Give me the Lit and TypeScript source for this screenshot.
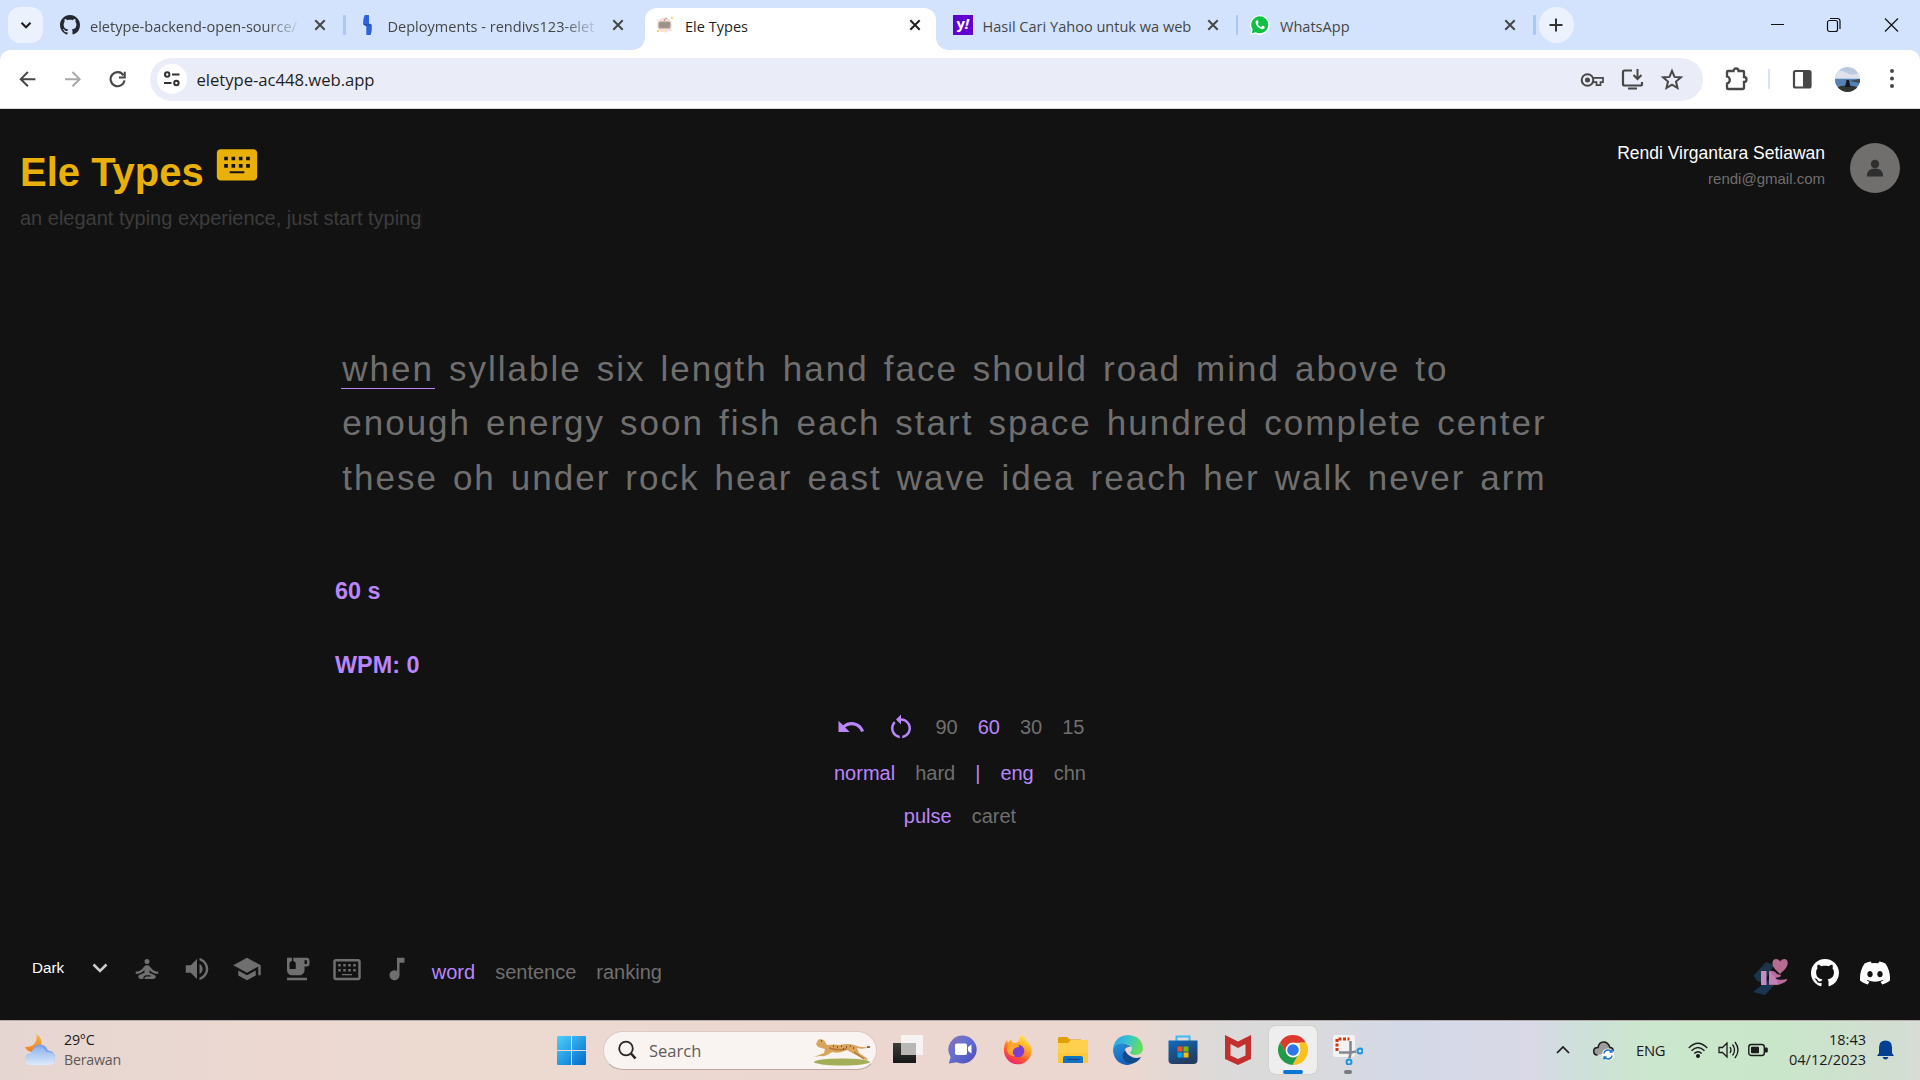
import { LitElement, html, css, svg } from "lit";
import { customElement } from "lit/decorators.js";

const GITHUB =
  "M8 0C3.58 0 0 3.58 0 8c0 3.54 2.29 6.53 5.47 7.59.4.07.55-.17.55-.38 0-.19-.01-.82-.01-1.49-2.01.37-2.53-.49-2.69-.94-.09-.23-.48-.94-.82-1.13-.28-.15-.68-.52-.01-.53.63-.01 1.08.58 1.23.82.72 1.21 1.87.87 2.33.66.07-.52.28-.87.51-1.07-1.78-.2-3.64-.89-3.64-3.95 0-.87.31-1.59.82-2.15-.08-.2-.36-1.02.08-2.12 0 0 .67-.21 2.2.82.64-.18 1.32-.27 2-.27s1.36.09 2 .27c1.53-1.04 2.2-.82 2.2-.82.44 1.1.16 1.92.08 2.12.51.56.82 1.27.82 2.15 0 3.07-1.87 3.75-3.65 3.95.29.25.54.73.54 1.48 0 1.07-.01 1.93-.01 2.2 0 .21.15.46.55.38A8.01 8.01 0 0 0 16 8c0-4.42-3.58-8-8-8z";
const DISCORD =
  "M20.317 4.37a19.79 19.79 0 0 0-4.885-1.515.074.074 0 0 0-.079.037c-.21.375-.444.864-.608 1.25a18.27 18.27 0 0 0-5.487 0 12.64 12.64 0 0 0-.617-1.25.077.077 0 0 0-.079-.037A19.74 19.74 0 0 0 3.677 4.37a.07.07 0 0 0-.032.027C.533 9.046-.32 13.58.099 18.057a.082.082 0 0 0 .031.057 19.9 19.9 0 0 0 5.993 3.03.078.078 0 0 0 .084-.028c.462-.63.874-1.295 1.226-1.994a.076.076 0 0 0-.041-.106 13.1 13.1 0 0 1-1.872-.892.077.077 0 0 1-.008-.128c.126-.094.252-.192.372-.291a.074.074 0 0 1 .077-.01c3.928 1.793 8.18 1.793 12.062 0a.074.074 0 0 1 .078.009c.12.099.246.198.373.292a.077.077 0 0 1-.006.127 12.3 12.3 0 0 1-1.873.892.077.077 0 0 0-.041.107c.36.698.772 1.362 1.225 1.993a.076.076 0 0 0 .084.028 19.84 19.84 0 0 0 6.002-3.03.077.077 0 0 0 .032-.054c.5-5.177-.838-9.674-3.549-13.66a.061.061 0 0 0-.031-.03zM8.02 15.33c-1.183 0-2.157-1.085-2.157-2.419 0-1.333.956-2.419 2.157-2.419 1.21 0 2.176 1.096 2.157 2.42 0 1.333-.956 2.418-2.157 2.418zm7.975 0c-1.183 0-2.157-1.085-2.157-2.419 0-1.333.955-2.419 2.157-2.419 1.21 0 2.176 1.096 2.157 2.42 0 1.333-.946 2.418-2.157 2.418z";
const KEYBOARD =
  "M21 4H3c-1.1 0-2 .9-2 2v13c0 1.1.9 2 2 2h18c1.1 0 2-.9 2-2V6c0-1.1-.9-2-2-2zM5 8h2v2H5zM9 8h2v2H9zM13 8h2v2h-2zM17 8h2v2h-2zM5 12h2v2H5zM9 12h2v2H9zM13 12h2v2h-2zM17 12h2v2h-2zM8 16h8v1H8z";
const KEYBOARD_OUTLINE =
  "M21 4H3c-1.1 0-2 .9-2 2v13c0 1.1.9 2 2 2h18c1.1 0 2-.9 2-2V6c0-1.1-.9-2-2-2zm0 15H3V6h18v13zM5 8h2v2H5zM9 8h2v2H9zM13 8h2v2h-2zM17 8h2v2h-2zM5 12h2v2H5zM9 12h2v2H9zM13 12h2v2h-2zM17 12h2v2h-2zM8 16h8v1H8z";
const UNDO =
  "M12.5 8c-2.65 0-5.05.99-6.9 2.6L2 7v9h9l-3.62-3.62c1.39-1.16 3.16-1.88 5.12-1.88 3.54 0 6.55 2.31 7.6 5.5l2.37-.78C21.08 11.03 17.15 8 12.5 8z";
const RESTART =
  "M12 5V2L8 6l4 4V7c3.31 0 6 2.69 6 6 0 2.97-2.17 5.43-5 5.91v2.02c3.95-.49 7-3.85 7-7.93 0-4.42-3.58-8-8-8zM6 13c0-1.65.67-3.15 1.76-4.24L6.34 7.34C4.9 8.79 4 10.79 4 13c0 4.08 3.05 7.44 7 7.93v-2.02c-2.83-.48-5-2.94-5-5.91z";
const MEDITATE =
  "M12 4a2 2 0 1 1 0 4a2 2 0 1 1 0-4zM21 16v-2c-2.24 0-4.16-.96-5.6-2.68l-1.34-1.6c-.38-.46-.94-.72-1.53-.72h-1.05c-.59 0-1.15.26-1.53.72l-1.34 1.6C7.16 13.04 5.24 14 3 14v2c2.77 0 5.19-1.17 7-3.25V15l-3.88 1.55c-.67.27-1.12.93-1.12 1.66C5 19.2 5.8 20 6.79 20H9v-.5c0-1.38 1.12-2.5 2.5-2.5h3c.28 0 .5.22.5.5s-.22.5-.5.5h-3c-.83 0-1.5.67-1.5 1.5v.5h7.1c.85 0 1.68-.54 1.87-1.37.19-.82-.22-1.6-.94-1.89L14 15v-2.25c1.81 2.08 4.23 3.25 7 3.25z";
const VOLUME =
  "M3 9v6h4l5 5V4L7 9H3zm13.5 3c0-1.77-1.02-3.29-2.5-4.03v8.05c1.48-.73 2.5-2.25 2.5-4.02zM14 3.23v2.06c2.89.86 5 3.54 5 6.71s-2.11 5.85-5 6.71v2.06c4.01-.91 7-4.49 7-8.77s-2.99-7.86-7-8.77z";
const SCHOOL = "M5 13.18v4L12 21l7-3.82v-4L12 17l-7-3.82zM12 3L1 9l11 6 9-4.91V17h2V9L12 3z";
const TEA =
  "M20 3H9v2.4l1.81 1.45c.12.09.19.24.19.39v4.26c0 .28-.22.5-.5.5h-4c-.28 0-.5-.22-.5-.5V7.24c0-.15.07-.3.19-.39L8 5.4V3H4v10c0 2.21 1.79 4 4 4h6c2.21 0 4-1.79 4-4v-3h2c1.11 0 2-.89 2-2V5c0-1.11-.89-2-2-2zm0 5h-2V5h2v3zM4 19h16v2H4z";
const NOTE =
  "M12 3v10.55c-.59-.34-1.27-.55-2-.55-2.21 0-4 1.79-4 4s1.79 4 4 4 4-1.79 4-4V7h4V3h-6z";

const glyph = (d: string, cls = "") =>
  html`<svg class="mi ${cls}" viewBox="0 0 24 24"><path fill-rule="evenodd" d=${d} /></svg>`;

const closeIcon = html`<svg class="x" viewBox="0 0 20 20"><path d="M5.3 5.3l9.4 9.4M14.7 5.3l-9.4 9.4" stroke="currentColor" stroke-width="2" /></svg>`;

const favGithub = svg`<svg class="fav" viewBox="0 0 16 16"><path fill="#24292f" d=${GITHUB} /></svg>`;
const favDeploy = html`<svg class="fav" viewBox="0 0 20 20"><path fill="#2f62d8" d="M6.500 .3q2.500-.8 4.500 0v8.200l2.500 1q1 5-.7 10.200-2.600.9-4.500 0V11.500L5.200 9.500Q4.800 5 6.500 .3z" /><path fill="#1f4bb5" d="M5.200 8.800l8.300 1v1l-6.500-.6z" /></svg>`;
const favEle = html`<svg class="fav" viewBox="0 0 20 20"><circle cx="9.500" cy="10" r="7.500" fill="#fadfd8" /><path d="M9 6q0-2 3-3" stroke="#a59a90" fill="none" /><rect x="3.500" y="6.500" width="12" height="7" rx="1.500" fill="#a39a8e" /><path d="M5 9h9M5 11h9" stroke="#8f867b" stroke-width=".8" /><circle cx="17" cy="3" r="1.100" fill="#f8d33c" /><circle cx="3" cy="16" r="1.100" fill="#f8d33c" /><circle cx="2.500" cy="5" r=".6" fill="#f0a090" /><circle cx="16" cy="15" r=".7" fill="#f0a090" /></svg>`;
const favYahoo = html`<span class="yahoo">y<i>!</i></span>`;
const favWa = html`<svg class="fav" viewBox="0 0 20 20"><path fill="#fff" d="M0 20l1.400-5A9.800 9.800 0 1 1 5 18.600z" /><path fill="#0cc143" d="M1.700 18.300l1-3.700a8.500 8.500 0 1 1 3 2.700z" /><path fill="#fff" d="M7 5.200c-.9.300-1.500 1.300-1.400 2.300.4 3.300 3.500 6.300 6.800 6.700 1 .1 2.200-.6 2.300-1.600.1-.6 0-.7-.3-.9l-1.700-.9c-.3-.1-.5 0-.7.2l-.8 1c-1.700-.6-2.900-1.800-3.500-3.200l.8-1c.1-.2.1-.4 0-.6L7.800 5.500c-.2-.4-.4-.4-.8-.3z" /></svg>`;

const TABS = [
  { icon: favGithub, text: "eletype-backend-open-source/", cls: "fade sep" },
  { icon: favDeploy, text: "Deployments - rendivs123-elet", cls: "fade" },
  { icon: favEle, text: "Ele Types", cls: "active" },
  { icon: favYahoo, text: "Hasil Cari Yahoo untuk wa web", cls: "sep" },
  { icon: favWa, text: "WhatsApp", cls: "sep" },
];

const LINES = [
  "when syllable six length hand face should road mind above to",
  "enough energy soon fish each start space hundred complete center",
  "these oh under rock hear east wave idea reach her walk never arm",
];

@customElement("browser-chrome")
class BrowserChrome extends LitElement {
  static styles = css`
    :host { display: block; height: 109px; background: #fff; font-family: "Open Sans", "Noto Sans", sans-serif; color: #444746; }
    svg { display: block; flex: none; }
    .strip { height: 50px; background: #d3e2fd; display: flex; align-items: center; padding-left: 8px; }
    .drop { width: 35px; height: 36px; border-radius: 12px; background: #ebf2fe; display: grid; place-items: center; margin-right: 7px; }
    .tab { width: 297.5px; height: 50px; box-sizing: border-box; display: flex; align-items: center; padding-left: 10px; position: relative; }
    .fav { width: 20px; height: 20px; margin-right: 10px; }
    .yahoo { width: 20px; height: 20px; flex: none; margin-right: 10px; background: #5f01d1; color: #fff; font: 700 15px/17px "Open Sans", sans-serif; text-align: center; letter-spacing: -0.5px; }
    .label { width: 210px; flex: none; overflow: hidden; white-space: nowrap; font-size: 14.55px; line-height: 24px; padding-top: 1px; }
    .fade .label { -webkit-mask-image: linear-gradient(90deg, #000 175px, transparent 212px); mask-image: linear-gradient(90deg, #000 175px, transparent 212px); }
    .x { width: 20px; height: 20px; margin-left: 10px; }
    .sep::after { content: ""; width: 2.5px; height: 20px; background: #a8c7fa; border-radius: 1px; margin-left: 13px; }
    .active { z-index: 1; color: #1f1f1f; }
    .active::before { content: ""; position: absolute; left: 0; right: 7px; top: 8px; bottom: 0; background: #fff; border-radius: 12px 12px 0 0; z-index: -1; }
    .active::after { content: ""; position: absolute; left: -12px; right: -5px; bottom: 0; height: 12px; z-index: -1;
      background: radial-gradient(circle at 0 0, transparent 11.5px, #fff 12px) left / 12px 12px no-repeat, radial-gradient(circle at 100% 0, transparent 11.5px, #fff 12px) right / 12px 12px no-repeat; }
    .plus { width: 35px; height: 36px; border-radius: 50%; background: #ebf2fe; display: grid; place-items: center; margin-left: 1px; }
    .win { margin-left: auto; display: flex; gap: 27px; padding-right: 14px; color: #111; }
    .bar { height: 59px; box-sizing: border-box; border-bottom: 1px solid #d5d7da; background: #fff; border-radius: 10px 10px 0 0; display: flex; align-items: center; padding-left: 15px; }
    .under { background: #d3e2fd; }
    .nav { display: flex; gap: 20px; width: 135px; }
    .omni { width: 1553px; height: 43px; border-radius: 22px; background: #eaedf7; box-sizing: border-box; display: flex; align-items: center; padding: 0 19px 0 7px; }
    .site { width: 30px; height: 30px; border-radius: 50%; background: #fff; display: grid; place-items: center; margin-right: 9.5px; }
    .url { color: #1f1f1f; font-size: 16.7px; letter-spacing: -0.05px; flex: 1; }
    .acts { display: flex; gap: 16px; }
    .right { display: flex; align-items: center; padding-left: 21px; }
    .vsep { width: 2px; height: 20px; background: #d3e2fd; margin: 0 21px 0 19px; }
    .me { width: 25px; height: 25px; border-radius: 50%; margin: 0 20px 0 22px; }
  `;
  render() {
    return html`
      <div class="strip">
        <span class="drop"><svg width="20" height="20" viewBox="0 0 20 20"><path d="M5.500 7.800l4.500 4.500 4.500-4.500" fill="none" stroke="#1f1f1f" stroke-width="2.100" /></svg></span>
        ${TABS.map((t) => html`<div class="tab ${t.cls}">${t.icon}<span class="label">${t.text}</span>${closeIcon}</div>`)}
        <span class="plus"><svg width="20" height="20" viewBox="0 0 20 20"><path d="M10 3.500v13M3.500 10h13" stroke="#333" stroke-width="2" /></svg></span>
        <span class="win">
          <svg width="30" height="20" viewBox="0 0 30 20"><path d="M9 9.500h13" stroke="currentColor" /></svg>
          <svg width="30" height="20" viewBox="0 0 30 20"><rect x="8.500" y="5.500" width="10" height="11" rx="2" fill="none" stroke="currentColor" stroke-width="1.200" /><path d="M11 3.500h7.500q2.500 0 2.500 2.500v8" fill="none" stroke="currentColor" stroke-width="1.200" /></svg>
          <svg width="30" height="20" viewBox="0 0 30 20"><path d="M9 3.500l13 13M22 3.500L9 16.500" stroke="currentColor" stroke-width="1.200" /></svg>
        </span>
      </div>
      <div class="under"><div class="bar">
        <div class="nav">
          <svg width="25" height="25" viewBox="0 0 20 20"><path d="M16.300 9.700H5M10.300 4L4.600 9.700l5.700 5.700" fill="none" stroke="#474747" stroke-width="1.600" /></svg>
          <svg width="25" height="25" viewBox="0 0 20 20"><path d="M4 9.700h11M10 4l5.700 5.700-5.700 5.700" fill="none" stroke="#a9a9a9" stroke-width="1.600" /></svg>
          <svg width="25" height="25" viewBox="0 0 20 20"><path d="M14.800 6.700A5.600 5.600 0 1 0 15.600 10.700" fill="none" stroke="#474747" stroke-width="1.700" /><path d="M15.800 3.700v4.700h-4.700" fill="none" stroke="#474747" stroke-width="1.600" /></svg>
        </div>
        <div class="omni">
          <span class="site"><svg width="18" height="18" viewBox="0 0 18 18" fill="none" stroke="#333" stroke-width="2"><circle cx="4.200" cy="4.500" r="2.200" /><path d="M9 4.500h7.500M1 13h7.500" /><circle cx="13.400" cy="13" r="2.200" /></svg></span>
          <span class="url">eletype-ac448.web.app</span>
          <span class="acts">
            <svg width="24" height="25" viewBox="0 0 24 25" fill="none" stroke="#474747" stroke-width="2"><circle cx="7.500" cy="13" r="5.800" /><circle cx="7.500" cy="13" r="1.500" fill="#474747" /><path d="M13 10.800h10v4.400h-2.500v3h-4v-3H13" stroke-width="1.700" /></svg>
            <svg width="24" height="25" viewBox="0 0 24 25" fill="none" stroke="#474747" stroke-width="2.200"><path d="M12 3.500H4.500q-1.500 0-1.500 1.500v12q0 1.500 1.500 1.500h16q1.500 0 1.500-1.500v-2M8 21.500h9" /><path d="M17.500 2v9M13.500 8l4 4 4-4" stroke-width="2" /></svg>
            <svg width="24" height="25" viewBox="0 0 24 25" fill="none" stroke="#474747" stroke-width="2"><path d="M12 3.800l2.500 6.100 6.400.5-4.900 4.200 1.500 6.400-5.500-3.400L6.500 21 8 14.600l-4.900-4.200 6.400-.5z" /></svg>
          </span>
        </div>
        <div class="right">
          <svg width="25" height="26" viewBox="0 0 25 26"><path d="M5 5h4.500a2.500 2.500 0 0 1 5 0H19q1 0 1 1v5a2.500 2.500 0 0 1 0 5V22q0 1-1 1H4q-1 0-1-1v-4.500a3.600 3.600 0 0 0 0-7V6q0-1 1-1z" fill="none" stroke="#474747" stroke-width="2.300" /></svg>
          <span class="vsep"></span>
          <svg width="22" height="24" viewBox="0 0 22 24"><rect x="3" y="4" width="16.500" height="16.500" rx="1.500" fill="none" stroke="#474747" stroke-width="2.200" /><path d="M12 4h7.500v16H12z" fill="#474747" /></svg>
          <svg class="me" viewBox="0 0 25 25"><rect width="25" height="25" fill="#b9c9e0" /><path d="M0 5q6-3 12 1t13-1v6H0z" fill="#dfe2ea" /><path d="M0 12h25v7H0z" fill="#5482b3" /><path d="M14 14l11-2v4z" fill="#3a4a56" /><path d="M0 20q12-3 25 0v5H0z" fill="#2f3630" /><path d="M11.500 13h2.500l1.500 7h-5.500z" fill="#151a22" /></svg>
          <svg width="24" height="24" viewBox="0 0 24 24" fill="#474747"><circle cx="12" cy="4" r="2" /><circle cx="12" cy="11.500" r="2" /><circle cx="12" cy="19" r="2" /></svg>
        </div>
      </div></div>
    `;
  }
}

@customElement("typing-page")
class TypingPage extends LitElement {
  static styles = css`
    :host { display: flex; flex-direction: column; box-sizing: border-box; height: 911px; background: #121212; font-family: "Liberation Sans", Arial, sans-serif; font-size: 20px; line-height: 23px; color: #706f6f; }
    svg { display: block; flex: none; }
    .mi { width: 30px; height: 30px; fill: currentColor; }
    .head { display: flex; justify-content: space-between; height: 206px; padding: 32px 20px 0; box-sizing: border-box; }
    h1 { margin: 0; font-size: 40px; line-height: 46px; color: #e8b009; display: flex; padding-top: 8px; }
    h1 span { width: 195px; }
    .big { width: 44px; height: 44px; margin-top: -7px; }
    .tag { margin-top: 12px; color: #3d3d3d; }
    .caret { border-right: 1px solid #1a1a1a; }
    .user { display: flex; gap: 25px; align-items: flex-start; }
    .names { text-align: right; }
    .name { color: #fff; font-size: 17.5px; line-height: 21px; padding-top: 2px; }
    .mail { font-size: 15px; line-height: 17px; margin-top: 6px; }
    .avatar { width: 50px; height: 50px; margin-top: 2px; border-radius: 50%; background: #706f6d; display: grid; place-items: center; }
    .words { padding: 26px 0 0 341px; height: 245px; box-sizing: border-box; font-size: 35px; letter-spacing: 2px; line-height: 54.5px; color: #706f6f; }
    .line { display: flex; gap: 12.5px; height: 54.5px; align-items: center; }
    .word { padding: 1px 1.25px 0; line-height: 39px; border-bottom: 1px solid transparent; }
    .cur { border-color: #bb86fc; }
    .stats { padding: 18px 0 0 335px; font-size: 23.4px; line-height: 27px; font-weight: 700; color: #bb86fc; height: 151px; box-sizing: border-box; }
    .stats div { margin-bottom: 47px; }
    .opts { display: flex; flex-direction: column; align-items: center; height: 241px; }
    .row { display: flex; gap: 20px; align-items: center; height: 23px; }
    .r1 { height: 30px; margin-top: 1px; }
    .r2 { margin-top: 19.5px; }
    .r3 { margin-top: 20px; }
    .on { color: #bb86fc; }
    .foot { display: flex; justify-content: space-between; }
    .left { display: flex; padding-left: 32px; }
    .dark { color: #fff; font-size: 15.2px; width: 59.5px; margin-top: 4px; }
    .chev { margin: 5px 24.5px 0 0; }
    .tools { display: flex; gap: 20px; margin-top: 2px; }
    .modes { display: flex; gap: 20px; margin: 9px 0 0 19.8px; }
    .links { display: flex; padding: 6px 30px 0 0; color: #fff; }
    .gh { width: 28px; height: 28px; margin: 1px 21px 0 21px; fill: #fff; }
    .dc { width: 30px; height: 30px; fill: #fff; }
  `;
  render() {
    return html`
      <div class="head">
        <div>
          <h1><span>Ele Types</span>${glyph(KEYBOARD, "big")}</h1>
          <div class="tag"><span class="caret">an elegant typing experience, just start typing</span></div>
        </div>
        <div class="user">
          <div class="names">
            <div class="name">Rendi Virgantara Setiawan</div>
            <div class="mail">rendi@gmail.com</div>
          </div>
          <span class="avatar"><svg width="20" height="20" viewBox="0 0 20 20" fill="#2f2f2f"><circle cx="10" cy="6" r="4.200" /><path d="M1.800 18.500q0-8 8.200-8t8.200 8z" /></svg></span>
        </div>
      </div>
      <div class="words">
        ${LINES.map((line, i) => html`<div class="line">${line.split(" ").map((w, j) => html`<span class="word ${i + j === 0 ? "cur" : ""}">${w}</span>`)}</div>`)}
      </div>
      <div class="stats"><div>60 s</div><div>WPM: 0</div></div>
      <div class="opts">
        <div class="row r1"><span class="on">${glyph(UNDO)}</span><span class="on">${glyph(RESTART)}</span><span>90</span><span class="on">60</span><span>30</span><span>15</span></div>
        <div class="row r2"><span class="on">normal</span><span>hard</span><span class="on">|</span><span class="on">eng</span><span>chn</span></div>
        <div class="row r3"><span class="on">pulse</span><span>caret</span></div>
      </div>
      <div class="foot">
        <div class="left">
          <span class="dark">Dark</span>
          <svg class="chev" width="16" height="22" viewBox="0 0 16 22"><path d="M1.500 7.500L8 14l6.500-6.500" fill="none" stroke="#ccc" stroke-width="2.600" /></svg>
          <div class="tools">${[MEDITATE, VOLUME, SCHOOL, TEA, KEYBOARD_OUTLINE, NOTE].map((d) => glyph(d))}</div>
          <div class="modes"><span class="on">word</span><span>sentence</span><span>ranking</span></div>
        </div>
        <div class="links">
          <svg width="38" height="38" viewBox="0 0 38 38"><path d="M2 17L14 4l8 3-8 14-4 4q-8-3-8-8z" fill="#1c3447" /><path d="M16 22h11L13 37 1 34z" fill="#193552" /><path d="M9 13h5.500v14H9z" fill="#c48bc4" /><path d="M17 13q5-1 8 3l4 1q0 3-7 3 6 3 13 1 1 3-9 6h-9z" fill="#b86d98" /><path d="M17 14h1l6 6 2 6h-9z" fill="#c98ac8" opacity=".7" /><path d="M28 16q-7-6-7.500-9.500Q20 1 24.500 1 27 1 28 3.500 29.500 1 32 1q4.500 0 3.500 5.500Q35 10 28 16z" fill="#b66b91" /></svg>
          <svg class="gh" viewBox="0 0 16 16"><path d=${GITHUB} /></svg>
          <svg class="dc" viewBox="0 0 24 24"><path d=${DISCORD} /></svg>
        </div>
      </div>
    `;
  }
}

const APPS = [
  html`<svg viewBox="0 0 30 30"><defs><linearGradient id="tv" x2="0" y2="1"><stop stop-color="#3d3d3d" /><stop offset="1" stop-color="#161616" /></linearGradient></defs><path fill="url(#tv)" d="M0 8h23v20H0z" /><path fill="#f8f6f5" d="M8 0h22v20H8z" opacity=".9" /><path fill="#b9b7b5" d="M8 8h15v12H8z" /></svg>`,
  html`<svg viewBox="0 0 30 30"><defs><linearGradient id="ch" x1="0" x2="1" y2="1"><stop stop-color="#8d6fb5" /><stop offset=".45" stop-color="#6470d2" /><stop offset="1" stop-color="#4a4ab8" /></linearGradient></defs><path fill="url(#ch)" d="M15 .5a14 14 0 1 1-6 26.800L.800 28.500 2.600 22A14 14 0 0 1 15 .5z" /><rect x="7" y="8.500" width="12" height="11.500" rx="1.800" fill="#fff" /><path fill="#fff" d="M20 12l3.500-2.500v9L20 16z" /></svg>`,
  html`<svg viewBox="0 0 30 30"><defs><linearGradient id="ff" x1=".8" y1="0" x2=".3" y2="1"><stop stop-color="#fff44f" /><stop offset=".35" stop-color="#ffb02a" /><stop offset=".7" stop-color="#ff5b30" /><stop offset="1" stop-color="#e81e70" /></linearGradient></defs><path fill="url(#ff)" d="M20 0q2 5 6 8 3 5 2.500 9A13.800 13.800 0 0 1 1 16Q0 10 4 5l1 3 3-4q0 3 3 4 5 0 5-4 1-3 4-4z" /><circle cx="15" cy="16" r="6.300" fill="#7a3fd0" /><path fill="#ffa62e" d="M5 9q4-2 9 1 3 0 2 2-3 0-5 2-3 4 1 7-7 0-8-6z" /></svg>`,
  html`<svg viewBox="0 0 30 30"><path fill="#e0a100" d="M0 3.500Q0 2 1.500 2H9l3 2.500h11V10H0z" /><path fill="#ffd04e" d="M0 8h10l3-3h15.500q1.500 0 1.500 1.500V28H0z" /><path fill="#f9c22b" d="M0 18h30v10H0z" opacity=".5" /><path fill="#1273c4" d="M5 28v-5q0-2 2-2h16q2 0 2 2v5z" /><path d="M9 24.500h12.500" stroke="#0b4c86" stroke-width="1.200" /></svg>`,
  html`<svg viewBox="0 0 30 30"><defs><linearGradient id="e1" x2="1" y2=".3"><stop stop-color="#2a9fe0" /><stop offset=".5" stop-color="#34c1d4" /><stop offset="1" stop-color="#66dd5f" /></linearGradient><linearGradient id="e2" x2=".4" y2="1"><stop stop-color="#2792dc" /><stop offset="1" stop-color="#1560b8" /></linearGradient></defs><path fill="url(#e1)" d="M0 15Q1 1 15 0q14 1 15 13 0 7-8 7-5 0-5-3 2-1 2-4-2-5-9-4Q3 10 0 15z" /><path fill="url(#e2)" d="M0 15q2-7 10-6.500 6 .5 8 3-7 0-7 7 1 9 11 8-4 4-9 3.500Q1 28 0 15z" /><path fill="#114b8c" d="M12 15q-4 4-1 10 4 5 10 3 5-2 7-6-5 2-9 0-5-2-7-7z" /></svg>`,
  html`<svg viewBox="0 0 30 30"><defs><linearGradient id="st" x2=".5" y2="1"><stop stop-color="#0f6cbd" /><stop offset="1" stop-color="#243a5e" /></linearGradient></defs><path d="M8.500 7V1.500h13V7" fill="none" stroke="#3cbcf3" stroke-width="2" /><path fill="url(#st)" d="M.5 5.500h29V25q0 4-4 4h-21q-4 0-4-4z" /><path fill="#f25022" d="M9.500 11.500h5v5h-5z" /><path fill="#7fba00" d="M15.500 11.500h5v5h-5z" /><path fill="#00a4ef" d="M9.500 17.500h5v5h-5z" /><path fill="#ffb900" d="M15.500 17.500h5v5h-5z" /></svg>`,
  html`<svg viewBox="0 0 30 30"><path fill="#c22f2f" d="M2 0l13 6.500L28 0v24l-13 6-13-6zM7.500 9v11.500l7.500 3.500 7.500-3.500V9L15 13z" fill-rule="evenodd" /></svg>`,
  html`<svg viewBox="0 0 30 30"><path fill="#dd3a2e" d="M2 7.500A15 15 0 0 1 28 7.500L15 8l-6.500 10z" /><path fill="#fbc11f" d="M28 7.500A15 15 0 0 1 14.500 30l7-11.500L22 7.500z" /><path fill="#249a48" d="M2 7.500A15 15 0 0 0 14.500 30l6-10.500-11.500-1z" /><circle cx="15" cy="15" r="7.400" fill="#fff" /><circle cx="15" cy="15" r="5.800" fill="#2b76ea" /></svg>`,
  html`<svg viewBox="0 0 30 30"><rect x="0" y="0" width="22" height="22" rx="2.500" fill="#f4f3f3" /><path d="M4 16V4h12.500" fill="none" stroke="#d0390b" stroke-width="3" stroke-dasharray="3 1.500" /><path d="M17.500 6v12l-1 5M6 17.500h12l5-1" fill="none" stroke="#84888d" stroke-width="2.600" /><circle cx="27" cy="16" r="2.500" fill="none" stroke="#1b96dd" stroke-width="2" /><circle cx="16" cy="27" r="2.500" fill="none" stroke="#1b96dd" stroke-width="2" /></svg>`,
];

@customElement("task-bar")
class TaskBar extends LitElement {
  static styles = css`
    :host { display: flex; align-items: center; box-sizing: border-box; height: 60px; border-top: 1px solid #b9aeae; padding-bottom: 1px; font-family: "Open Sans", "Noto Sans", sans-serif; color: #1b1b1b;
      background: linear-gradient(90deg, #e6d6d1 0, #ecd8d1 280px, #ecdad1 440px, #ebd7d0 800px, #ebd7d0 1130px, #dcdad9 1220px, #dadadc 1310px, #d4d9e7 1400px, #d9d9e7 1530px, #cfdfdc 1575px, #cbe7cd 1650px, #c9e6ca 1780px, #d3ddd2 1900px, #d8ddd6 1920px); }
    svg { display: block; flex: none; }
    .weather { display: flex; width: 557px; }
    .weather svg { margin: 3px 8px 0 24px; }
    .wt { font-size: 14.2px; line-height: 20px; letter-spacing: -0.2px; margin-top: -1px; }
    .wt div + div { color: #5d5755; }
    .search { width: 274px; height: 39px; box-sizing: border-box; border-radius: 20px; background: #f9f3f1; border: 1px solid #ddcac5; border-bottom-color: #bca9a5; margin: 0 15px 0 17px; display: flex; align-items: center; padding-left: 13px; color: #5f5b5a; font-size: 16.5px; }
    .search span { width: 164px; margin-left: 12px; }
    .cat { margin-top: 3px; }
    .apps { display: flex; margin-left: -8px; }
    .app { width: 48px; height: 48px; margin-right: 7px; box-sizing: border-box; border-radius: 6px; display: grid; place-items: center; position: relative; }
    .app svg { width: 30px; height: 30px; }
    .lit { background: #eeeeee; box-shadow: 0 0 1px #9a9a9a; }
    .lit::after, .run::after { content: ""; position: absolute; bottom: 0; left: 14px; width: 20px; height: 4px; border-radius: 2px; background: #0b77d4; }
    .run::after { left: 20px; width: 8px; background: #7b7b7f; }
    .tray { margin-left: auto; display: flex; align-items: center; padding-right: 26px; }
    .eng { font-size: 14.8px; line-height: 20px; width: 51px; letter-spacing: -0.3px; margin: -1px 1px 0 -1px; }
    .clock { font-size: 14.5px; line-height: 20px; text-align: right; width: 98px; margin: -1px 11px 0 0; white-space: nowrap; }
  `;
  render() {
    return html`
      <div class="weather">
        <svg width="32" height="36" viewBox="0 0 32 36"><defs><linearGradient id="m" x2="0" y2="1"><stop stop-color="#f6bb3c" /><stop offset="1" stop-color="#ee7f24" /></linearGradient><linearGradient id="c" x2="0" y2="1"><stop stop-color="#8fb4ee" /><stop offset="1" stop-color="#dceafc" /></linearGradient></defs><path fill="url(#m)" d="M12.500 0q6.500 5 4.500 12l-9.500 6q-5-1-6.500-5 13 0 11.500-13z" /><path fill="#7fa3e6" d="M8 20q1-9.500 8-9.500 6 0 8 6 7 1 7 7t-5 6H14z" /><path fill="url(#c)" d="M7 31q-6 0-6-6t6-6q2-6 8-6 5 0 7 5 9-1 9 6 0 7-7 7z" /></svg>
        <div class="wt"><div>29°C</div><div>Berawan</div></div>
      </div>
      <svg width="29" height="29" viewBox="0 0 29 29"><defs><linearGradient id="w" x2="1" y2="1"><stop stop-color="#4fd0fb" /><stop offset="1" stop-color="#0069cc" /></linearGradient></defs><path fill="url(#w)" d="M1 0h13v14H0V1zM15 0h13q1 0 1 1v13H15zM0 15h14v14H1q-1 0-1-1zM15 15h14v13q0 1-1 1H15z" /></svg>
      <div class="search">
        <svg width="20" height="20" viewBox="0 0 20 20" fill="none" stroke="#262626"><circle cx="9" cy="8.500" r="6.800" stroke-width="1.800" /><path d="M14 13.500l4.500 5" stroke-width="2.600" /></svg>
        <span>Search</span>
        <svg class="cat" width="58" height="28" viewBox="0 0 58 28"><ellipse cx="29" cy="24" rx="28" ry="3.400" fill="#a3ae59" /><path d="M5 2l2-1 4 1 3 5q7-1 13 0 8-2 14 0 7 3 16 2-7 3-13 1l2 5 9 6-2 1-12-6-7-4q-8 4-15 2-6 5-12 4L1 19l5-2 5-2 1-4-7-2-2-3z" fill="#d9a45c" /><path d="M16 10q9 3 18 1M41 14l10 7" stroke="#b8783a" stroke-width="1.500" fill="none" /><path d="M20 8h1M24 9h1M28 8h1M33 9h1M37 8h1M40 10h1M30 11h1M54 9h3M8 3h1" stroke="#6b4424" stroke-width="1.300" /></svg>
      </div>
      <div class="apps">${APPS.map((a, i) => html`<span class="app ${i === 7 ? "lit" : i === 8 ? "run" : ""}">${a}</span>`)}</div>
      <div class="tray">
        <svg width="37" height="20" viewBox="0 0 37 20"><path d="M1 13l6-6 6 6" fill="none" stroke="#1b1b1b" stroke-width="1.700" /></svg>
        <svg width="44" height="22" viewBox="0 0 44 22"><path d="M4.500 16H4Q.700 15.500.700 12T5 8.500Q6 3 10.500 3T17 8.500q3.500 0 3 4" fill="#9c9c9c" stroke="#1b1b1b" stroke-width="1.500" /><circle cx="15" cy="15.500" r="6" fill="#fff" /><path d="M10.800 14.500q1-3.500 4.200-3.500 2 0 3.500 1.500M19.200 16.500q-1 3.500-4.200 3.500-2 0-3.500-1.500M19 10.500v2.500h-2.500M11 20.500V18h2.500" fill="none" stroke="#1670c5" stroke-width="1.300" /></svg>
        <span class="eng">ENG</span>
        <svg width="30" height="20" viewBox="0 0 30 20" fill="none" stroke="#1b1b1b" stroke-width="1.400"><path d="M.8 8Q10-1.500 19.200 8M3.500 10.800q6.500-6.500 13 0M6.300 13.600q3.700-3.700 7.400 0" /><circle cx="10" cy="16" r="1.300" fill="#1b1b1b" /></svg>
        <svg width="30" height="20" viewBox="0 0 30 20" fill="none" stroke="#1b1b1b" stroke-width="1.300"><path d="M1 7.500h3.500L9 3v14l-4.500-4.500H1zM12 7q2 3 0 6M14.500 4.500q4 5.500 0 11M17 2q6 8 0 16" /></svg>
        <svg width="20" height="20" viewBox="0 0 20 20"><rect x=".8" y="4.500" width="15.500" height="11" rx="2.500" fill="none" stroke="#1b1b1b" stroke-width="1.400" /><rect x="3" y="6.700" width="8" height="6.600" rx=".8" fill="#1b1b1b" /><path d="M17 7.500h1.500q1.300 0 1.300 1.300v2.400q0 1.300-1.300 1.300H17z" fill="#1b1b1b" /></svg>
        <div class="clock"><div>18:43</div><div>04/12/2023</div></div>
        <svg width="17" height="20" viewBox="0 0 17 20" fill="#043f92"><path d="M8.500.5q6.500 0 6.500 7v5.500l2 3H0l2-3V7.500q0-7 6.500-7zM5.500 17h6q-1 2.500-3 2.500t-3-2.500z" /></svg>
      </div>
    `;
  }
}

@customElement("app-root")
class AppRoot extends LitElement {
  static styles = css`
    :host { display: block; width: 1920px; height: 1080px; overflow: hidden; }
  `;
  render() {
    return html`<browser-chrome></browser-chrome><typing-page></typing-page><task-bar></task-bar>`;
  }
}
